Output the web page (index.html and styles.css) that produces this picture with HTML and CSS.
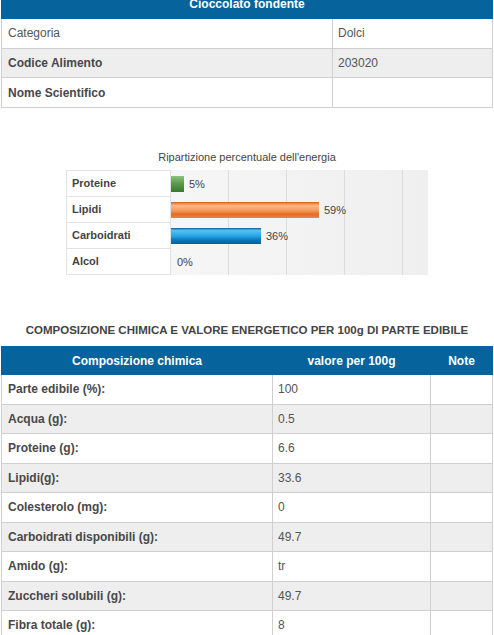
FILE: index.html
```html
<!DOCTYPE html>
<html lang="it">
<head>
<meta charset="utf-8">
<title>Cioccolato fondente</title>
<link rel="stylesheet" href="styles.css">
</head>
<body>
<div class="page">
  <table class="info">
    <thead>
      <tr><th colspan="2">Cioccolato fondente</th></tr>
    </thead>
    <tbody>
      <tr><td class="lbl normal">Categoria</td><td class="val">Dolci</td></tr>
      <tr class="alt"><td class="lbl">Codice Alimento</td><td class="val">203020</td></tr>
      <tr><td class="lbl">Nome Scientifico</td><td class="val"></td></tr>
    </tbody>
  </table>

  <div class="chart">
    <div class="chart-title">Ripartizione percentuale dell'energia</div>
    <div class="chart-body">
      <div class="labels">
        <div class="label">Proteine</div>
        <div class="label">Lipidi</div>
        <div class="label">Carboidrati</div>
        <div class="label">Alcol</div>
      </div>
      <div class="plot">
        <div class="bar-row"><span class="bar green" style="width:13px"></span><span class="pct">5%</span></div>
        <div class="bar-row"><span class="bar orange" style="width:148px"></span><span class="pct">59%</span></div>
        <div class="bar-row"><span class="bar blue" style="width:90px"></span><span class="pct">36%</span></div>
        <div class="bar-row"><span class="bar" style="width:0"></span><span class="pct zero">0%</span></div>
      </div>
    </div>
  </div>

  <h2 class="section">COMPOSIZIONE CHIMICA E VALORE ENERGETICO PER 100g DI PARTE EDIBILE</h2>

  <table class="comp">
    <thead>
      <tr><th class="c1">Composizione chimica</th><th class="c2">valore per 100g</th><th class="c3">Note</th></tr>
    </thead>
    <tbody>
      <tr><td class="lbl">Parte edibile (%):</td><td class="val">100</td><td></td></tr>
      <tr class="alt"><td class="lbl">Acqua (g):</td><td class="val">0.5</td><td></td></tr>
      <tr><td class="lbl">Proteine (g):</td><td class="val">6.6</td><td></td></tr>
      <tr class="alt"><td class="lbl">Lipidi(g):</td><td class="val">33.6</td><td></td></tr>
      <tr><td class="lbl">Colesterolo (mg):</td><td class="val">0</td><td></td></tr>
      <tr class="alt"><td class="lbl">Carboidrati disponibili (g):</td><td class="val">49.7</td><td></td></tr>
      <tr><td class="lbl">Amido (g):</td><td class="val">tr</td><td></td></tr>
      <tr class="alt"><td class="lbl">Zuccheri solubili (g):</td><td class="val">49.7</td><td></td></tr>
      <tr><td class="lbl">Fibra totale (g):</td><td class="val">8</td><td></td></tr>
    </tbody>
  </table>
</div>
</body>
</html>
```
FILE: styles.css
```css
html, body {
  margin: 0;
  padding: 0;
  background: #fff;
}
body {
  font-family: "Liberation Sans", Arial, sans-serif;
  font-size: 12px;
  color: #555;
  overflow: hidden;
}
.page {
  padding: 0 1px;
  margin-top: -12px;
}
table {
  width: 492px;
  border-collapse: collapse;
}
th {
  background: #07639b;
  color: #fff;
  font-weight: bold;
  font-size: 12px;
  height: 29px;
  padding: 0;
  text-align: center;
  border: 1px solid #07639b;
  border-left-color: #8fb5d0;
}
th:first-child { border-left-color: #07639b; }
td {
  border: 1px solid #cfcfcf;
  height: 28px;
  padding: 0 0 0 6px;
  vertical-align: middle;
  color: #555;
}
.val { padding-left: 5px; }
.lbl { font-weight: bold; color: #484848; }
.lbl.normal { font-weight: normal; color: #555; }
.alt td { background: #eeeeee; }

.info { border: 1px solid #cfcfcf; }
.info .lbl { width: 324px; }
.info td { height: 28.7px; }

.chart {
  width: 362px;
  margin: 43px auto 0;
}
.chart-title {
  text-align: center;
  font-size: 11px;
  color: #444;
  line-height: 13px;
  margin-bottom: 6px;
}
.chart-body {
  display: flex;
}
.labels {
  width: 103px;
  border: 1px solid #e2e2e2;
  background: #fff;
}
.label {
  height: 25px;
  line-height: 25px;
  border-bottom: 1px solid #e2e2e2;
  padding-left: 5px;
  font-size: 11px;
  font-weight: bold;
  color: #444;
}
.label:last-child { border-bottom: none; }
.plot {
  flex: 1;
  padding-top: 1px;
  background:
    repeating-linear-gradient(to right, transparent 0, transparent 57px, #dcdcdc 57px, #dcdcdc 58px),
    linear-gradient(to right, #f6f6f6, #efefef);
  background-size: 233px 100%, 100% 100%;
  background-repeat: no-repeat;
}
.bar-row {
  height: 26px;
  display: flex;
  align-items: center;
}
.bar {
  display: block;
  height: 16px;
}
.green {
  background: linear-gradient(#8cc47e 0%, #5c9b4d 45%, #3a7a2e 100%);
}
.orange {
  background: linear-gradient(#f07a30 0%, #fbb88a 18%, #f59a5c 50%, #e46c22 75%, #e9844a 100%);
  border-top: 1px solid #d8692a;
  height: 15px;
}
.blue {
  background: linear-gradient(#0c5e93 0%, #55c1f2 15%, #2aa4e4 50%, #0677bd 75%, #0a5f98 100%);
}
.pct {
  margin-left: 5px;
  font-size: 11px;
  color: #444;
}
.pct.zero { margin-left: 6px; }

.section {
  margin: 48px 0 9px;
  text-align: center;
  font-size: 11.5px;
  font-weight: bold;
  color: #444;
  line-height: 14px;
}

.comp { border: 1px solid #cfcfcf; }
.comp th { height: 27px; }
.comp .c1 { width: 270px; }
.comp .c2 { width: 157px; }
.comp td { height: 28.5px; }
```
